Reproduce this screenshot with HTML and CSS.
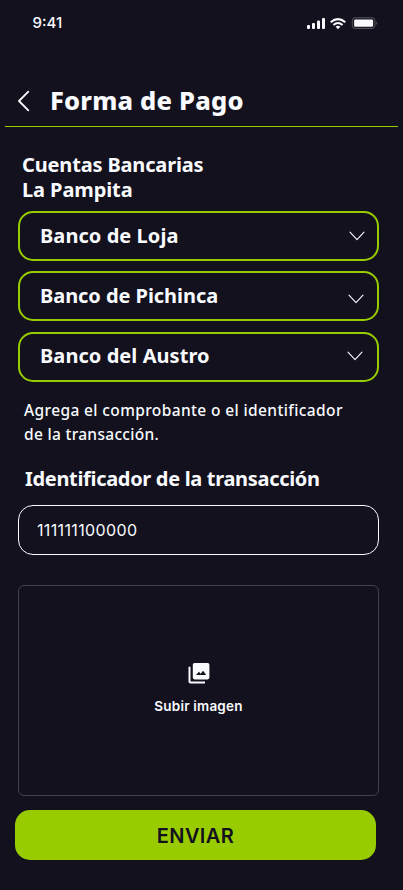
FILE: index.html
```
<!DOCTYPE html>
<html lang="es">
<head>
<meta charset="utf-8">
<meta name="viewport" content="width=device-width, initial-scale=1">
<title>Forma de Pago</title>
<link rel="stylesheet" href="styles.css">
</head>
<body>
<div class="status">
  <span class="time">9:41</span>
  <svg class="status-icons" width="72" height="14" viewBox="0 0 72 14" fill="#f9fbff">
    <rect x="1" y="8" width="3" height="4" rx="1"/>
    <rect x="6" y="6" width="3" height="6" rx="1"/>
    <rect x="11" y="3.5" width="3" height="8.5" rx="1"/>
    <rect x="16" y="1" width="3" height="11" rx="1"/>
    <g fill="none" stroke="#f9fbff" stroke-width="2">
      <path d="M24.7 5.3Q32-1.1 39.3 5.3"/>
      <path d="M27.4 8Q32 4 36.6 8"/>
    </g>
    <path d="M29.6 9.7Q32 7.8 34.4 9.7L32 12.2z"/>
    <rect x="46.3" y=".8" width="22.6" height="10.6" rx="2.8" fill="none" stroke="#5b5a64" stroke-width="1"/>
    <rect x="48.1" y="2.4" width="19" height="7.4" rx="1.3"/>
    <path d="M70.3 4.2q2 1.8 0 3.8z" fill="#5b5a64"/>
  </svg>
</div>
<header class="header">
  <svg width="14" height="22" viewBox="0 0 14 22" fill="none" stroke="#f9fbff" stroke-width="1.8" stroke-linecap="round" stroke-linejoin="round"><path d="M11.3 1.6 2 11l9.3 9.4"/></svg>
  <h1>Forma de Pago</h1>
</header>
<main class="content">
  <div class="intro"><h2 class="accounts">Cuentas Bancarias</h2><h2 class="owner">La Pampita</h2></div>
  <div class="banks">
    <div class="bank loja"><span>Banco de Loja</span><svg class="chevron" viewBox="0 0 16 10"><path d="M1 1.2 8 8.6l7-7.4"/></svg></div>
    <div class="bank pichinca"><span>Banco de Pichinca</span><svg class="chevron" viewBox="0 0 16 10"><path d="M1 1.2 8 8.6l7-7.4"/></svg></div>
    <div class="bank austro"><span>Banco del Austro</span><svg class="chevron" viewBox="0 0 16 10"><path d="M1 1.2 8 8.6l7-7.4"/></svg></div>
  </div>
  <p class="hint"><span class="hint-a">Agrega el comprobante o el identificador</span><br><span class="hint-b">de la transacción.</span></p>
  <h2 class="label">Identificador de la transacción</h2>
  <div class="field"><span>111111100000</span></div>
  <div class="upload">
    <svg width="22" height="22" viewBox="0 0 22 22" fill="#f9fbff"><path d="M1.5 4.8v14.7a1 1 0 0 0 1 1H17" fill="none" stroke="#f9fbff" stroke-width="2"/><path fill-rule="evenodd" d="M6.6 1h13a1.8 1.8 0 0 1 1.8 1.8v12.8a1.8 1.8 0 0 1-1.8 1.8h-13a1.8 1.8 0 0 1-1.8-1.8V2.8A1.8 1.8 0 0 1 6.6 1zM8 13h10.2l-3.1-4.3-2.5 3.1-1.6-2z"/></svg>
    <span>Subir imagen</span>
  </div>
</main>
<div class="send"><span>ENVIAR</span></div>
</body>
</html>
```
FILE: styles.css
```
* { box-sizing: border-box; }
html { background: #12111d; }
body { margin: 0; height: 890px; overflow: hidden; color: #f9fbff; font-family: "Noto Sans", sans-serif; display: flex; flex-direction: column; }
h1, h2, p { margin: 0; white-space: nowrap; }
.status { height: 76px; padding: 13px 25.5px 0 32.5px; display: flex; justify-content: space-between; align-items: flex-start; }
.time { font: 500 15px/20px Inter, sans-serif; }
.status-icons { margin-top: 4px; }
.header { height: 51px; margin: 0 5px; padding-left: 12px; border-bottom: 1px solid #9c0; display: flex; align-items: center; gap: 19px; }
h1 { margin-top: -2px; font-size: 25.5px; line-height: 32px; font-weight: 800; letter-spacing: .2px; }
.content { padding: 25px 24px 0 18px; }
.intro { padding-left: 4px; }
h2 { font-size: 20px; line-height: 25px; font-weight: 700; }
.accounts { letter-spacing: -.16px; }
.owner { letter-spacing: -.1px; }
.banks { display: flex; flex-direction: column; gap: 10px; margin-top: 9px; }
.bank { height: 50px; border: 2px solid #9c0; border-radius: 15px; padding: 0 12px 0 20px; display: flex; align-items: center; justify-content: space-between; font-size: 20px; font-weight: 700; line-height: 26px; }
.loja { letter-spacing: .06px; }
.pichinca { letter-spacing: -.06px; }
.austro { margin-top: 1px; letter-spacing: .06px; }
.austro span { margin-top: -2px; }
.pichinca .chevron { margin: 5px 1px 0 0; }
.austro .chevron { margin: -2px 2px 0 0; }
.chevron { width: 16px; height: 10px; fill: none; stroke: #f9fbff; stroke-width: 1.1; stroke-linecap: round; stroke-linejoin: round; }
.hint { margin: 16px 0 0 6px; font-size: 15.5px; line-height: 24px; font-weight: 500; }
.hint-a { letter-spacing: .38px; }
.hint-b { letter-spacing: .3px; }
.label { margin: 20px 0 0 7px; letter-spacing: -.32px; }
.field { margin-top: 14px; height: 50px; border: 1px solid #f9fbff; border-radius: 15px; padding-left: 18px; display: flex; align-items: center; font: 400 16px/24px Inter, sans-serif; letter-spacing: .36px; }
.upload { margin-top: 30px; height: 211px; border: 1px solid #424248; border-radius: 6px; display: flex; flex-direction: column; align-items: center; padding-top: 76px; gap: 12px; font: 600 13.5px/20px Inter, sans-serif; letter-spacing: .2px; }
.send { margin: 14px 27px 0 15px; height: 50px; flex: none; border-radius: 15px; background: #9c0; color: #12111d; display: flex; align-items: center; justify-content: center; font: 600 20px/26px Inter, sans-serif; letter-spacing: .4px; }
.send span { margin-top: 1px; }
```
